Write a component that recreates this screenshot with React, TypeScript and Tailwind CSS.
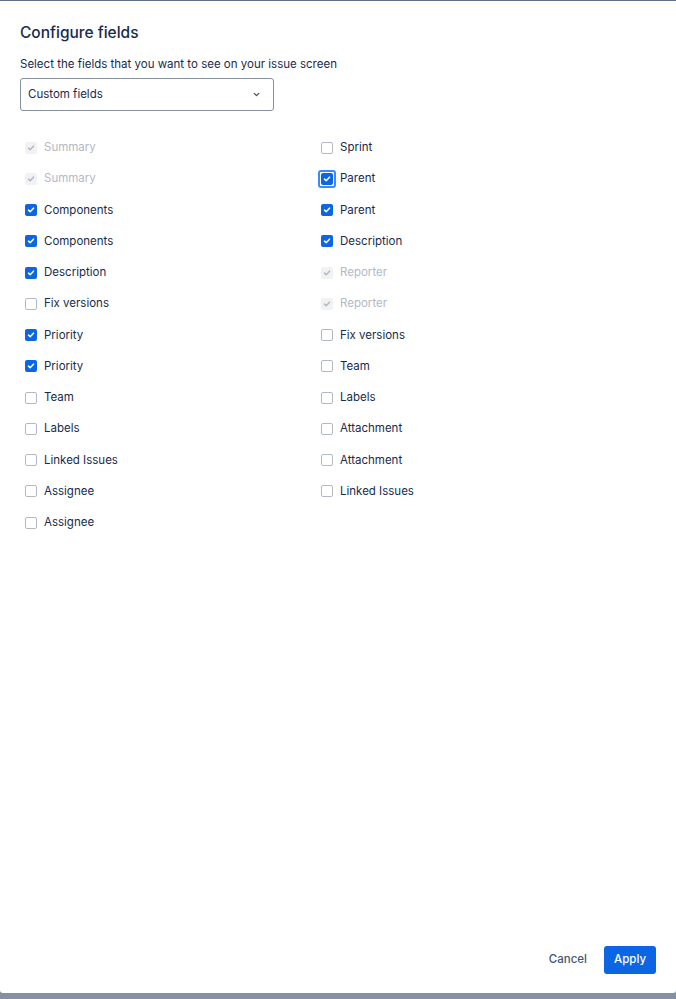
import React, { useState } from 'react';

type Field = { label: string; checked: boolean; disabled?: boolean; focused?: boolean };

const left: Field[] = [
  { label: 'Summary', checked: true, disabled: true },
  { label: 'Summary', checked: true, disabled: true },
  { label: 'Components', checked: true },
  { label: 'Components', checked: true },
  { label: 'Description', checked: true },
  { label: 'Fix versions', checked: false },
  { label: 'Priority', checked: true },
  { label: 'Priority', checked: true },
  { label: 'Team', checked: false },
  { label: 'Labels', checked: false },
  { label: 'Linked Issues', checked: false },
  { label: 'Assignee', checked: false },
  { label: 'Assignee', checked: false },
];

const right: Field[] = [
  { label: 'Sprint', checked: false },
  { label: 'Parent', checked: true, focused: true },
  { label: 'Parent', checked: true },
  { label: 'Description', checked: true },
  { label: 'Reporter', checked: true, disabled: true },
  { label: 'Reporter', checked: true, disabled: true },
  { label: 'Fix versions', checked: false },
  { label: 'Team', checked: false },
  { label: 'Labels', checked: false },
  { label: 'Attachment', checked: false },
  { label: 'Attachment', checked: false },
  { label: 'Linked Issues', checked: false },
];

function Check({ color }: { color: string }) {
  return (
    <svg viewBox="0 0 12 12" className="w-[10px] h-[10px]">
      <path d="M3 6.2 L5 8 L9 3.8" fill="none" stroke={color} strokeWidth="1.8" strokeLinecap="round" strokeLinejoin="round" />
    </svg>
  );
}

function Row({ field }: { field: Field }) {
  const [checked, setChecked] = useState(field.checked);
  let box;
  if (field.disabled) {
    box = (
      <span className="w-3 h-3 rounded-[2px] bg-[#f1f2f4] flex items-center justify-center">
        <Check color="#b3b9c4" />
      </span>
    );
  } else if (checked) {
    box = (
      <span className="w-3 h-3 rounded-[2px] bg-[#0c66e4] flex items-center justify-center">
        <Check color="#ffffff" />
      </span>
    );
  } else {
    box = <span className="w-3 h-3 rounded-[2px] border-[1.5px] border-[#b3b9c4] bg-white" />;
  }
  return (
    <label
      className="flex items-center h-[31.25px] cursor-pointer"
      onClick={() => !field.disabled && setChecked((c) => !c)}
    >
      <span className="w-6 flex items-center pl-[5px]">
        {field.focused ? (
          <span className="-ml-[3px] p-[1px] rounded-[3px] border-2 border-[#388bff] flex">{box}</span>
        ) : (
          box
        )}
      </span>
      <span className={`text-[11.5px] ${field.disabled ? 'text-[#b3b9c4]' : 'text-[#172b4d]'}`}>
        {field.label}
      </span>
    </label>
  );
}

export default function App() {
  return (
    <div className="h-[999px] bg-[#8590a2] border-t border-[#626f86] font-['Inter',sans-serif] overflow-hidden">
      <div className="h-[992px] bg-white rounded-b-[3px] flex flex-col">
        <div className="px-5 pt-[21px] flex-1">
          <h1 className="text-[15.5px] font-medium text-[#172b4d] leading-[22px]">Configure fields</h1>
          <p className="mt-3 text-[11.5px] text-[#172b4d] leading-4">
            Select the fields that you want to see on your issue screen
          </p>
          <button className="mt-[6px] w-[254px] h-[33px] border border-[#8590a2] rounded-[3px] flex items-center justify-between pl-[7px] pr-[12px] text-[11.5px] text-[#172b4d]">
            <span>Custom fields</span>
            <svg viewBox="0 0 12 12" className="w-[9px] h-[9px]">
              <path d="M3 4.5 L6 7.5 L9 4.5" fill="none" stroke="#44546f" strokeWidth="1.8" strokeLinecap="round" strokeLinejoin="round" />
            </svg>
          </button>
          <div className="grid grid-cols-[296px_296px] mt-[21px]">
            <div>
              {left.map((f, i) => (
                <Row key={i} field={f} />
              ))}
            </div>
            <div>
              {right.map((f, i) => (
                <Row key={i} field={f} />
              ))}
            </div>
          </div>
        </div>
        <div className="flex justify-end gap-[5px] px-5 pb-[19px]">
          <button className="h-7 px-3 text-[11.5px] font-medium text-[#44546f] rounded-[3px]">Cancel</button>
          <button className="h-7 px-[10px] text-[11.5px] font-medium text-white bg-[#0c66e4] rounded-[3px]">Apply</button>
        </div>
      </div>
    </div>
  );
}
